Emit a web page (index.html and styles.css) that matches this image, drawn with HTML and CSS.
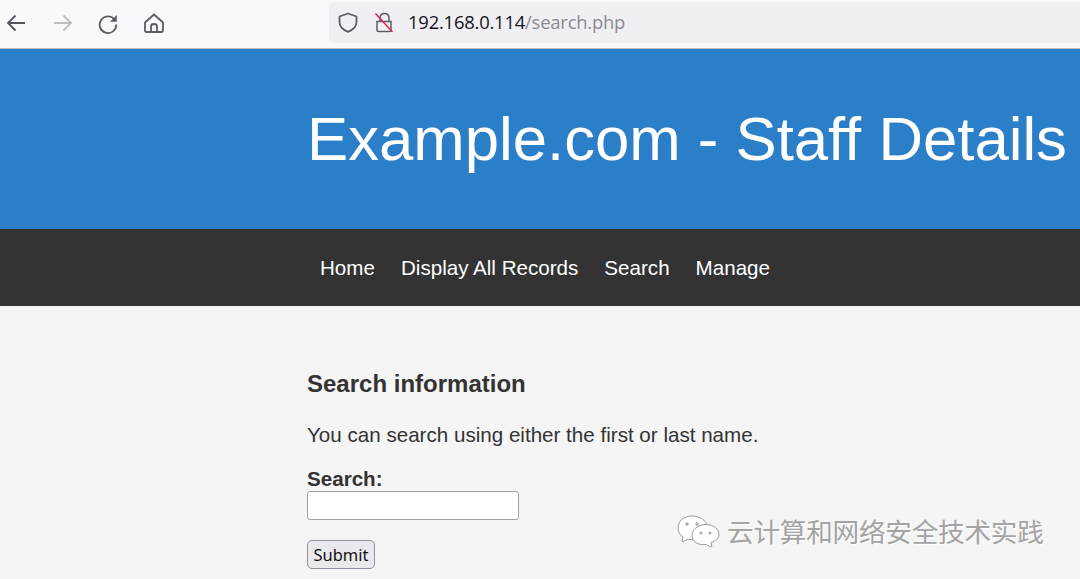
FILE: index.html
```
<!DOCTYPE html>
<html lang="en">
<head>
<meta charset="utf-8">
<title>Staff Details</title>
<link rel="stylesheet" href="styles.css">
</head>
<body>
<div class="toolbar">
  <div class="navs">
    <svg class="ic ic-back" width="22" height="22" viewBox="0 0 22 22"><path d="M20 11H3M10.500 3.500L3 11L10.500 18.500" fill="none" stroke="#55555f" stroke-width="1.800"/></svg>
    <svg class="ic ic-fwd" width="22" height="22" viewBox="0 0 22 22"><path d="M3 11H20M12.500 3.500L20 11L12.500 18.500" fill="none" stroke="#bdbdc3" stroke-width="1.800"/></svg>
    <svg class="ic ic-reload" width="22" height="22" viewBox="0 0 22 22"><path d="M17.800 8A8.300 8.300 0 1 0 19.300 12.500" fill="none" stroke="#5b5b66" stroke-width="1.800"/><path d="M19.800 3V9.800H13Z" fill="#5b5b66"/></svg>
    <svg class="ic ic-home" width="22" height="22" viewBox="0 0 22 22"><path d="M11 2.500L20 10.500V18.500Q20 20 18.500 20H3.500Q2 20 2 18.500V10.500ZM8 20V14.500Q8 12 11 12Q14 12 14 14.500V20" fill="none" stroke="#5b5b66" stroke-width="1.800" stroke-linejoin="round"/></svg>
  </div>
  <div class="urlbar">
    <svg class="ic-shield" width="20" height="21" viewBox="0 0 20 21"><path d="M10 1.500L18.500 4.500V10Q18.500 16.500 10 19.800Q1.500 16.500 1.500 10V4.500Z" fill="none" stroke="#5b5b66" stroke-width="1.800" stroke-linejoin="round"/></svg>
    <svg class="ic-lock" width="20" height="21" viewBox="0 0 20 21"><path d="M6 9V6Q6 1.500 10.500 1.500Q15 1.500 15 6V9M3 9.500H17V18Q17 19.500 15.500 19.500H4.500Q3 19.500 3 18Z" fill="none" stroke="#5b5b66" stroke-width="1.500"/><path d="M1.500 1.500L18.500 20" stroke="#e22850" stroke-width="1.600"/></svg>
    <span class="url"><span class="host">192.168.0.114</span><span class="path">/search.php</span></span>
  </div>
</div>
<header class="banner"><h1 class="title">Example.com - Staff Details</h1></header>
<nav class="menu">
  <a class="item" href="#">Home</a>
  <a class="item" href="#">Display All Records</a>
  <a class="item" href="#">Search</a>
  <a class="item" href="#">Manage</a>
</nav>
<main class="content">
  <h2 class="heading">Search information</h2>
  <p class="intro">You can search using either the first or last name.</p>
  <form class="form">
    <label class="label" for="q">Search:</label>
    <input class="field" id="q" type="text">
    <button class="submit" type="button">Submit</button>
  </form>
  <div class="watermark">
    <svg class="wechat" width="44" height="32" viewBox="0 0 44 32"><path d="M15 1C7 1 1 6 1 13C1 17 3 20 6 22L5 27L11 24L16 25C15 18 22 11 31 12C30 6 23 1 15 1Z" fill="#fff" stroke="#9a9a9a" stroke-width="1"/><path d="M29 13C21 13 15 18 15 24C15 30 21 34 29 33L35 36L34 31C39 29 42 27 42 23C42 18 37 13 29 13Z" transform="translate(0 -3.500)" fill="#fff" stroke="#9a9a9a" stroke-width="1"/><circle cx="10" cy="9" r="1.700" fill="#aaa"/><circle cx="20" cy="9" r="1.700" fill="#aaa"/><circle cx="24" cy="18" r="1.500" fill="#aaa"/><circle cx="33" cy="18" r="1.500" fill="#aaa"/></svg>
    <span class="wm-text">云计算和网络安全技术实践</span>
  </div>
</main>
</body>
</html>
```
FILE: styles.css
```
* { box-sizing: border-box; }
html, body { margin: 0; padding: 0; height: 579px; overflow: hidden; }
body { background: #f5f5f5; font-family: "Liberation Sans", Arial, sans-serif; color: #333; }
.toolbar { height: 49px; background: #f9f9fb; border-bottom: 1px solid #b9b9bd; display: flex; align-items: flex-start; }
.navs { width: 329px; display: flex; padding: 12px 0 0 5px; gap: 24px; }
.ic { display: block; flex: none; }
.urlbar { width: 751px; height: 41px; margin-top: 2px; background: #f0f0f4; border-radius: 5px 0 0 5px; display: flex; align-items: center; padding-left: 9px; }
.ic-shield { flex: none; margin-right: 16px; }
.ic-lock { flex: none; margin-right: 14px; }
.url { font-family: "Open Sans", sans-serif; font-size: 18.400px; line-height: 24px; letter-spacing: -0.200px; white-space: nowrap; margin-top: -2px; }
.host { color: #15141a; }
.path { color: #8a8a92; }
.banner { height: 180px; background: #2b7fc9; padding-left: 307px; overflow: hidden; }
.title { margin: 0; padding-top: 54px; font-size: 61.700px; line-height: 72px; font-weight: 400; color: #fff; white-space: nowrap; }
.menu { height: 77px; background: #333; padding: 1px 0 0 307px; display: flex; align-items: center; }
.item { color: #fff; text-decoration: none; font-size: 20.600px; padding: 0 13px; white-space: nowrap; }
.content { position: relative; padding: 64px 0 0 307px; }
.heading { margin: 0; font-size: 24px; line-height: 28px; font-weight: 700; color: #333; }
.intro { margin: 25px 0 0; font-size: 20.600px; line-height: 24px; }
.form { margin-top: 20px; display: flex; flex-direction: column; align-items: flex-start; }
.label { font-size: 20.600px; line-height: 24px; font-weight: 700; }
.field { width: 212px; height: 29px; margin: 0; background: #fff; border: 1px solid #a0a0a8; border-radius: 3px; }
.submit { width: 68px; height: 29px; margin-top: 20px; padding: 0; background: #e9e9ed; border: 1px solid #8f8f9d; border-radius: 5px; font-family: "Noto Sans", sans-serif; font-size: 16.500px; color: #111; }
.watermark { position: absolute; left: 677px; top: 208px; display: flex; align-items: center; gap: 6px; }
.wm-text { font-family: "Noto Sans CJK SC", sans-serif; font-size: 26.700px; line-height: 34px; color: #a4a4a4; white-space: nowrap; letter-spacing: -0.300px; text-shadow: 1px 1px 1px #fff; }
```
